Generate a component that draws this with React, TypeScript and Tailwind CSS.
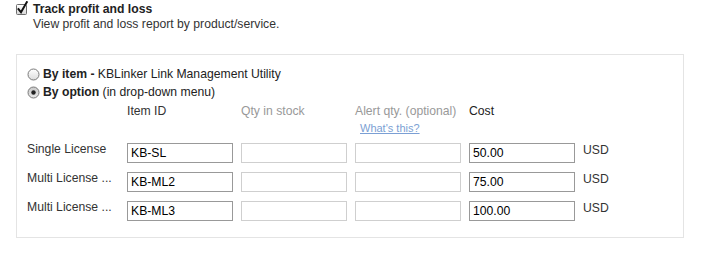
import React from "react";

function CheckIcon() {
  return (
    <svg width="14" height="15" viewBox="0 0 14 15" className="block">
      <defs>
        <linearGradient id="cbg" x1="0" y1="0" x2="0" y2="1">
          <stop offset="0" stopColor="#ffffff" />
          <stop offset="1" stopColor="#d8d8d8" />
        </linearGradient>
      </defs>
      <rect x="1.5" y="3.5" width="10" height="10" rx="1" fill="url(#cbg)" stroke="#6e6e6e" />
      <path d="M3.5 8.2 L6 11.3 L11.8 1.2" fill="none" stroke="#111" strokeWidth="2" strokeLinecap="square" />
    </svg>
  );
}

function Radio({ checked }: { checked?: boolean }) {
  return (
    <svg width="13" height="13" viewBox="0 0 13 13" className="block">
      <defs>
        <linearGradient id={checked ? "rg1" : "rg0"} x1="0" y1="0" x2="0" y2="1">
          <stop offset="0" stopColor={checked ? "#c8c8c8" : "#ffffff"} />
          <stop offset="1" stopColor={checked ? "#e8e8e8" : "#dcdcdc"} />
        </linearGradient>
      </defs>
      <circle cx="6.5" cy="6.5" r="5.5" fill={`url(#${checked ? "rg1" : "rg0"})`} stroke="#7a7a7a" strokeWidth="1" />
      {checked && <circle cx="6.5" cy="6.5" r="2.2" fill="#222" />}
    </svg>
  );
}

function Field({ value, dark }: { value?: string; dark?: boolean }) {
  return (
    <div
      className={`h-[20px] w-[106px] border bg-white px-[3px] text-[12.2px] leading-[18px] text-black ${
        dark ? "border-[#999999]" : "border-[#cfcfcf]"
      }`}
    >
      {value}
    </div>
  );
}

const rows = [
  { label: "Single License", id: "KB-SL", cost: "50.00" },
  { label: "Multi License ...", id: "KB-ML2", cost: "75.00" },
  { label: "Multi License ...", id: "KB-ML3", cost: "100.00" },
];

export default function App() {
  return (
    <div className="h-[258px] w-[701px] bg-white font-['Liberation_Sans',Arial,sans-serif] text-[12.2px] text-[#222]">
      <div className="flex pl-[15px] pt-[1px]">
        <div>
          <CheckIcon />
        </div>
        <div className="ml-[4px] pt-[1px]">
          <div className="font-bold leading-[14px] text-[#222]">Track profit and loss</div>
          <div className="mt-[1px] leading-[14px] text-[#333]">View profit and loss report by product/service.</div>
        </div>
      </div>

      <div className="ml-[16px] mt-[23px] h-[184px] w-[668px] border border-[#e4e4e4] pl-[10px] pt-[10px]">
        <div className="flex h-[18px] items-center">
          <Radio />
          <span className="ml-[3px]">
            <b>By item - </b>KBLinker Link Management Utility
          </span>
        </div>
        <div className="flex h-[18px] items-center">
          <Radio checked />
          <span className="ml-[3px]">
            <b>By option</b> (in drop-down menu)
          </span>
        </div>

        <div className="mt-[3px] flex">
          <div className="w-[100px]" />
          <div className="flex gap-[8px]">
            <div className="w-[106px] leading-[14px] text-[#333]">Item ID</div>
            <div className="w-[106px] leading-[14px] text-[#999]">Qty in stock</div>
            <div className="w-[106px] text-[#999]">
              <div className="leading-[14px]">Alert qty. (optional)</div>
              <div className="mt-[3px] pl-[5px] leading-[14px] text-[11px] text-[#7b9fd4] underline">What's this?</div>
            </div>
            <div className="w-[106px] leading-[14px] text-[#222]">Cost</div>
          </div>
        </div>

        <div className="mt-[8px] flex flex-col gap-[9px]">
          {rows.map((r, i) => (
            <div key={i} className="flex items-start">
              <div className="-mt-[1px] w-[100px] leading-[14px] text-[#333]">{r.label}</div>
              <div className="flex gap-[8px]">
                <Field value={r.id} dark />
                <Field />
                <Field />
                <Field value={r.cost} dark />
              </div>
              <div className="ml-[8px] leading-[14px] text-[#333]">USD</div>
            </div>
          ))}
        </div>
      </div>
    </div>
  );
}
